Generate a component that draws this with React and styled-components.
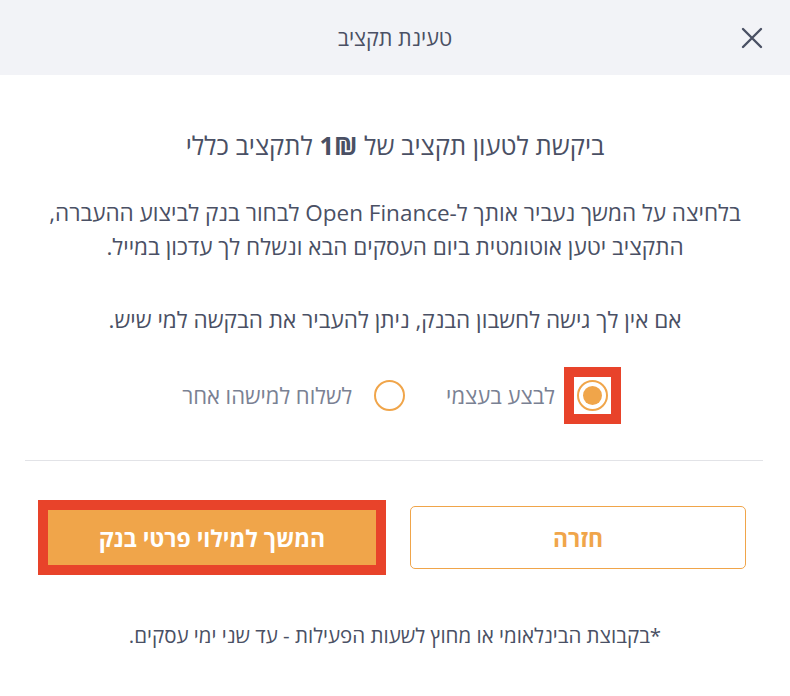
import React, { useState } from 'react'
import styled, { createGlobalStyle } from 'styled-components'

const GlobalStyle = createGlobalStyle`
  html, body {
    margin: 0;
    padding: 0;
    background: #ffffff;
  }
  body {
    font-family: 'Open Sans', 'DejaVu Sans', sans-serif;
    color: #4a5064;
  }
`

const palette = {
  text: '#4a5064',
  muted: '#7a8193',
  orange: '#f0a54a',
  red: '#e8432a',
  header: '#f2f3f7',
  divider: '#e2e3e7',
}

const options = [
  { id: 'self', label: 'לבצע בעצמי', highlight: true },
  { id: 'other', label: 'לשלוח למישהו אחר' },
]

export default function App() {
  const [choice, setChoice] = useState('self')

  return (
    <>
      <GlobalStyle />
      <Modal dir="rtl">
        <Header>
          <CloseButton aria-label="סגירה">
            <svg width="22" height="22" viewBox="0 0 22 22">
              <path d="M2 2 L20 20 M20 2 L2 20" stroke={palette.text} strokeWidth="2.4" strokeLinecap="round" />
            </svg>
          </CloseButton>
          <HeaderTitle>טעינת תקציב</HeaderTitle>
          <span />
        </Header>

        <Body>
          <Heading>
            ביקשת לטעון תקציב של <b>1₪</b> לתקציב כללי
          </Heading>
          <Text>
            בלחיצה על המשך נעביר אותך ל-Open Finance לבחור בנק לביצוע ההעברה,
            <br />
            התקציב יטען אוטומטית ביום העסקים הבא ונשלח לך עדכון במייל.
          </Text>
          <Text $gap>אם אין לך גישה לחשבון הבנק, ניתן להעביר את הבקשה למי שיש.</Text>

          <RadioGroup>
            {options.map(opt => (
              <RadioOption key={opt.id} onClick={() => setChoice(opt.id)}>
                <RadioFrame $highlight={opt.highlight}>
                  <RadioRing>{choice === opt.id && <RadioDot />}</RadioRing>
                </RadioFrame>
                <RadioLabel>{opt.label}</RadioLabel>
              </RadioOption>
            ))}
          </RadioGroup>
        </Body>

        <Divider />

        <Actions>
          <Button $variant="ghost">חזרה</Button>
          <Button $variant="primary" $highlight>המשך למילוי פרטי בנק</Button>
        </Actions>

        <Footnote>*בקבוצת הבינלאומי או מחוץ לשעות הפעילות - עד שני ימי עסקים.</Footnote>
      </Modal>
    </>
  )
}

const Modal = styled.div`
  width: 790px;
  min-height: 696px;
  background: #fff;
  display: flex;
  flex-direction: column;
`

const Header = styled.header`
  height: 75px;
  background: ${palette.header};
  display: grid;
  grid-template-columns: 76px 1fr 76px;
  align-items: center;
`

const CloseButton = styled.button`
  border: 0;
  background: transparent;
  padding: 0;
  display: flex;
  align-items: center;
  justify-content: center;
  cursor: pointer;
`

const HeaderTitle = styled.h2`
  margin: 0;
  text-align: center;
  font-size: 21.5px;
  font-weight: 400;
  color: ${palette.text};
`

const Body = styled.section`
  display: flex;
  flex-direction: column;
  align-items: center;
  padding: 55px 20px 0;
  text-align: center;
`

const Heading = styled.h1`
  margin: 0;
  font-size: 25.5px;
  line-height: 30px;
  font-weight: 400;
  color: ${palette.text};

  b {
    font-weight: 700;
  }
`

const Text = styled.p`
  margin: ${p => (p.$gap ? '39px' : '36px')} 0 0;
  font-size: 22.5px;
  line-height: 34px;
  color: ${palette.text};
`

const RadioGroup = styled.div`
  display: flex;
  align-items: center;
  gap: 41px;
  margin-top: 40px;
  height: 36px;
`

const RadioOption = styled.label`
  display: flex;
  align-items: center;
  gap: 22px;
  cursor: pointer;
`

const RadioFrame = styled.span`
  width: 31px;
  height: 31px;
  display: flex;
  outline: ${p => (p.$highlight ? `10px solid ${palette.red}` : 'none')};
  outline-offset: 3px;
`

const RadioRing = styled.span`
  width: 31px;
  height: 31px;
  box-sizing: border-box;
  border: 2px solid ${palette.orange};
  border-radius: 50%;
  display: flex;
  align-items: center;
  justify-content: center;
`

const RadioDot = styled.span`
  width: 19px;
  height: 19px;
  border-radius: 50%;
  background: ${palette.orange};
`

const RadioLabel = styled.span`
  font-size: 22px;
  color: ${palette.muted};
`

const Divider = styled.hr`
  margin: 47px 27px 0 25px;
  border: 0;
  border-top: 1px solid ${palette.divider};
`

const Actions = styled.div`
  display: grid;
  grid-template-columns: 1fr 1fr;
  gap: 30px;
  padding: 45px 44px 0;
`

const Button = styled.button`
  height: 63px;
  box-sizing: border-box;
  font-family: inherit;
  font-size: 23px;
  font-weight: 700;
  border-radius: ${p => (p.$variant === 'primary' ? '0' : '5px')};
  border: 1px solid ${palette.orange};
  background: ${p => (p.$variant === 'primary' ? palette.orange : '#fff')};
  color: ${p => (p.$variant === 'primary' ? '#fff' : palette.orange)};
  outline: ${p => (p.$highlight ? `10px solid ${palette.red}` : 'none')};
  outline-offset: -4px;
  cursor: pointer;
`

const Footnote = styled.p`
  margin: 54px 0 0;
  text-align: center;
  font-size: 20.5px;
  line-height: 24px;
  color: ${palette.text};
`
